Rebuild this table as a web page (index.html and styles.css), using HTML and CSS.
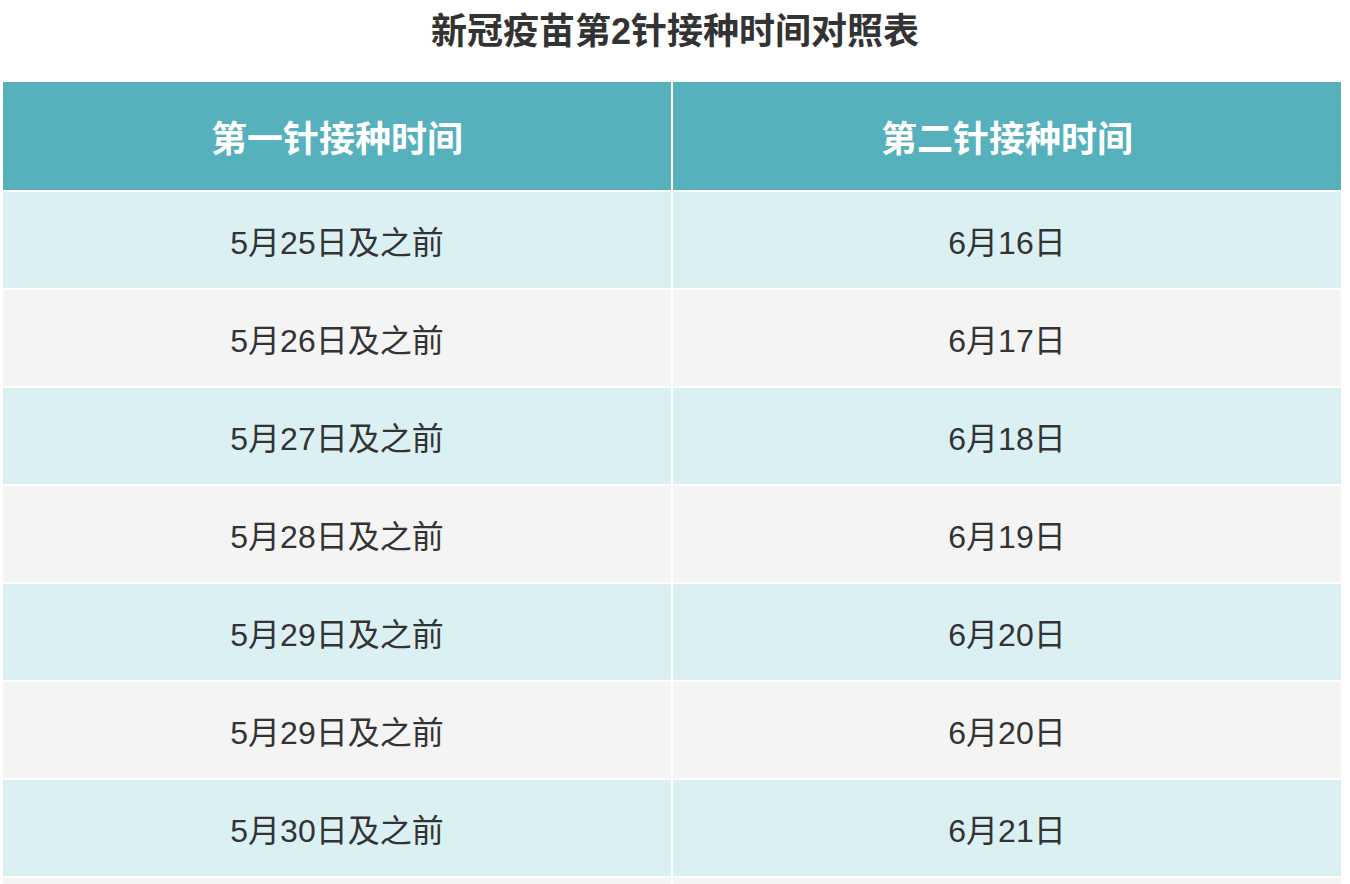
FILE: index.html
```html
<!DOCTYPE html>
<html lang="zh-CN">
<head>
<meta charset="utf-8">
<title>新冠疫苗第2针接种时间对照表</title>
<link rel="stylesheet" href="styles.css">
</head>
<body>
<h1 class="title">新冠疫苗第2针接种时间对照表</h1>
<table class="schedule">
  <thead>
    <tr><th>第一针接种时间</th><th>第二针接种时间</th></tr>
  </thead>
  <tbody>
    <tr class="odd"><td>5月25日及之前</td><td>6月16日</td></tr>
    <tr class="even"><td>5月26日及之前</td><td>6月17日</td></tr>
    <tr class="odd"><td>5月27日及之前</td><td>6月18日</td></tr>
    <tr class="even"><td>5月28日及之前</td><td>6月19日</td></tr>
    <tr class="odd"><td>5月29日及之前</td><td>6月20日</td></tr>
    <tr class="even"><td>5月29日及之前</td><td>6月20日</td></tr>
    <tr class="odd"><td>5月30日及之前</td><td>6月21日</td></tr>
    <tr class="even"><td></td><td></td></tr>
  </tbody>
</table>
</body>
</html>
```

FILE: styles.css
```css
html, body {
  margin: 0;
  padding: 0;
  background: #ffffff;
}
body {
  font-family: "Liberation Sans", "Noto Sans CJK SC", sans-serif;
  color: #333333;
  overflow: hidden;
}
.title {
  margin: 0 0 16px 0;
  height: 64px;
  line-height: 64px;
  font-size: 36px;
  font-weight: 700;
  text-align: center;
  color: #333333;
}
.schedule {
  margin-left: 1px;
  width: 1342px;
  border-collapse: separate;
  border-spacing: 2px;
  table-layout: fixed;
}
.schedule th {
  height: 108px;
  padding: 0;
  background: #56b1bc;
  color: #ffffff;
  font-size: 36px;
  font-weight: 700;
  text-align: center;
  vertical-align: middle;
}
.schedule td {
  height: 96px;
  padding: 0;
  font-size: 32px;
  font-weight: 400;
  text-align: center;
  vertical-align: middle;
  color: #333333;
}
.schedule .odd td {
  background: #dbf0f3;
}
.schedule .even td {
  background: #f4f4f4;
}
```
